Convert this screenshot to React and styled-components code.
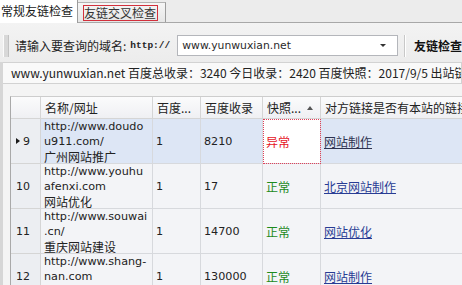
import React from "react"
import styled, { createGlobalStyle } from "styled-components"

const GlobalStyle = createGlobalStyle`
  html, body {
    margin: 0;
    padding: 0;
    background: #f0f0f0;
    overflow: hidden;
  }
  body {
    font-family: "Noto Sans CJK SC", "DejaVu Sans", sans-serif;
    font-size: 12px;
    color: #1e1e1e;
  }
`

const rows = [
  { id: 9, name: ["http://www.doudo", "u911.com/", "广州网站推广"], rank: "1", total: "8210", snap: "异常", link: "网站制作", current: true },
  { id: 10, name: ["http://www.youhu", "afenxi.com", "网站优化"], rank: "1", total: "17", snap: "正常", link: "北京网站制作" },
  { id: 11, name: ["http://www.souwai", ".cn/", "重庆网站建设"], rank: "1", total: "14700", snap: "正常", link: "网站优化" },
  { id: 12, name: ["http://www.shang-", "nan.com", "商南网站建设"], rank: "1", total: "130000", snap: "正常", link: "网站制作" },
]

const App = () => (
  <Window>
    <GlobalStyle />
    <TabStrip>
      <Tab active>常规友链检查</Tab>
      <Tab>
        <FocusBox>友链交叉检查</FocusBox>
      </Tab>
    </TabStrip>
    <Toolbar>
      <Gripper />
      <Label>请输入要查询的域名:</Label>
      <Proto>http://</Proto>
      <Combo>
        <ComboText>www.yunwuxian.net</ComboText>
        <ComboArrow />
      </Combo>
      <Separator />
      <ToolButton>友链检查</ToolButton>
    </Toolbar>
    <Content>
      <StatusBar>
        www.yunwuxian.net 百度总收录：3240 今日收录：2420 百度快照：2017/9/5 出站链接：36 反链：128
      </StatusBar>
      <GridArea>
        <Grid>
          <HeadCell />
          <HeadCell>名称/网址</HeadCell>
          <HeadCell>百度...</HeadCell>
          <HeadCell>百度收录</HeadCell>
          <HeadCell>
            快照...
            <SortArrow />
          </HeadCell>
          <HeadCell>对方链接是否有本站的链接</HeadCell>
          {rows.map(r => (
            <React.Fragment key={r.id}>
              <RowHead>
                {r.current && <RowMarker />}
                {r.id}
              </RowHead>
              <Cell current={r.current}>
                <Lines>
                  <Latin>{r.name[0]}</Latin>
                  <Latin>{r.name[1]}</Latin>
                  <Han>{r.name[2]}</Han>
                </Lines>
              </Cell>
              <Cell current={r.current}>
                <Latin>{r.rank}</Latin>
              </Cell>
              <Cell current={r.current}>
                <Latin>{r.total}</Latin>
              </Cell>
              <Cell current={r.current} focused={r.current}>
                <Status bad={r.snap === "异常"}>{r.snap}</Status>
              </Cell>
              <Cell current={r.current}>
                <LinkText visited={r.current}>{r.link}</LinkText>
              </Cell>
            </React.Fragment>
          ))}
        </Grid>
      </GridArea>
    </Content>
  </Window>
)

export default App

const Window = styled.div`
  width: 462px;
  height: 285px;
  overflow: hidden;
  background: #f0f0f0;
`

const TabStrip = styled.div`
  display: flex;
  align-items: flex-end;
  height: 23px;
  box-sizing: border-box;
  border-bottom: 1px solid #a8a8a8;
  background: #ececec;
`

const Tab = styled.div`
  box-sizing: border-box;
  height: ${p => (p.active ? "24px" : "20px")};
  margin-bottom: ${p => (p.active ? "-1px" : "0")};
  padding: ${p => (p.active ? "0 4px 0 1px" : "0 7px 0 5px")};
  display: flex;
  align-items: center;
  background: ${p => (p.active ? "#ffffff" : "linear-gradient(#f6f6f6, #e6e6e6)")};
  border: 1px solid #9c9c9c;
  border-left: ${p => (p.active ? "none" : "0")};
  border-bottom: none;
  border-top: ${p => (p.active ? "none" : "1px solid #b4b4b4")};
  color: #1a1a1a;
  line-height: 16px;
`

const FocusBox = styled.span`
  border: 1px solid #d2303c;
  padding: 0 1px 0 0;
  line-height: 14px;
  color: #333;
`

const Toolbar = styled.div`
  height: 39px;
  box-sizing: border-box;
  padding: 6px 0 0 3px;
  display: flex;
  align-items: center;
  background: linear-gradient(#f3f3f3, #ececec);
  white-space: nowrap;
`

const Gripper = styled.div`
  width: 4px;
  height: 22px;
  background: #d8d8d8;
  border-left: 1px solid #fbfbfb;
  border-right: 1px solid #c2c2c2;
  margin-right: 6px;
`

const Label = styled.span`
  color: #1e1e1e;
`

const Proto = styled.span`
  font-family: "Liberation Mono", monospace;
  font-weight: bold;
  font-size: 9.5px;
  margin-left: 4px;
  color: #222;
`

const Combo = styled.div`
  margin-left: 7px;
  width: 222px;
  height: 21px;
  box-sizing: border-box;
  border: 1px solid #b4b6bb;
  background: #fff;
  display: flex;
  align-items: center;
  justify-content: space-between;
  padding: 0 11px 0 4px;
`

const ComboText = styled.span`
  font-family: "DejaVu Sans", sans-serif;
  font-size: 10.8px;
  color: #2a2a2a;
`

const ComboArrow = styled.span`
  width: 0;
  height: 0;
  border-left: 3px solid transparent;
  border-right: 3px solid transparent;
  border-top: 3px solid #333;
`

const Separator = styled.div`
  width: 1px;
  height: 22px;
  background: #c8c8c8;
  border-right: 1px solid #fff;
  margin: 0 8px 0 6px;
`

const ToolButton = styled.span`
  font-weight: bold;
  color: #111;
`

const Content = styled.div`
  border-left: 3px solid #d6d6d6;
  background: #f4f4f4;
  height: 223px;
`

const StatusBar = styled.div`
  height: 22px;
  box-sizing: border-box;
  border: 1px solid #d2d2d2;
  border-left: none;
  background: #f9f9f9;
  padding-left: 8px;
  line-height: 20px;
  white-space: nowrap;
  overflow: hidden;
  color: #222;
`

const GridArea = styled.div`
  padding: 12px 0 0 7px;
`

const Grid = styled.div`
  display: grid;
  grid-template-columns: 30px 112px 48px 62px 58px 220px;
  grid-template-rows: 22px repeat(4, 45px);
  border-left: 1px solid #a9a9a9;
  border-top: 1px solid #cdcdcd;
  background: #fff;
`

const HeadCell = styled.div`
  box-sizing: border-box;
  display: flex;
  align-items: center;
  padding-left: 4px;
  border-right: 1px solid #d5d5d5;
  border-bottom: 1px solid #d5d5d5;
  background: linear-gradient(#fbfbfc, #eff0f3);
  white-space: nowrap;
  overflow: hidden;
  color: #222;
`

const SortArrow = styled.span`
  margin-left: 6px;
  width: 0;
  height: 0;
  border-left: 3px solid transparent;
  border-right: 3px solid transparent;
  border-bottom: 4px solid #555;
`

const RowHead = styled.div`
  box-sizing: border-box;
  display: flex;
  align-items: center;
  padding-left: 5px;
  border-right: 1px solid #d5d5d5;
  border-bottom: 1px solid #d5d5d5;
  background: #eceef2;
  font-family: "DejaVu Sans", sans-serif;
  font-size: 11px;
  color: #222;
`

const RowMarker = styled.span`
  width: 0;
  height: 0;
  border-top: 3.5px solid transparent;
  border-bottom: 3.5px solid transparent;
  border-left: 4px solid #1a1a1a;
  margin-right: 3px;
`

const Cell = styled.div`
  box-sizing: border-box;
  display: flex;
  align-items: center;
  padding-left: 3px;
  border-right: 1px solid #d7d9dd;
  border-bottom: 1px solid #d7d9dd;
  background: ${p => (p.focused ? "#ffffff" : p.current ? "#dde6f5" : "#f3f4f7")};
  outline: ${p => (p.focused ? "1px dotted #e0405a" : "none")};
  outline-offset: -1px;
  white-space: nowrap;
  overflow: hidden;
`

const Lines = styled.div`
  display: flex;
  flex-direction: column;
`

const Latin = styled.span`
  font-family: "DejaVu Sans", sans-serif;
  font-size: 11.2px;
  line-height: 15px;
  color: #222;
`

const Han = styled.span`
  font-size: 12px;
  line-height: 15px;
  color: #222;
`

const Status = styled.span`
  color: ${p => (p.bad ? "#e5141e" : "#1d8a1d")};
  line-height: 15px;
`

const LinkText = styled.span`
  color: ${p => (p.visited ? "#2e3350" : "#283c94")};
  text-decoration: underline;
  line-height: 15px;
`
